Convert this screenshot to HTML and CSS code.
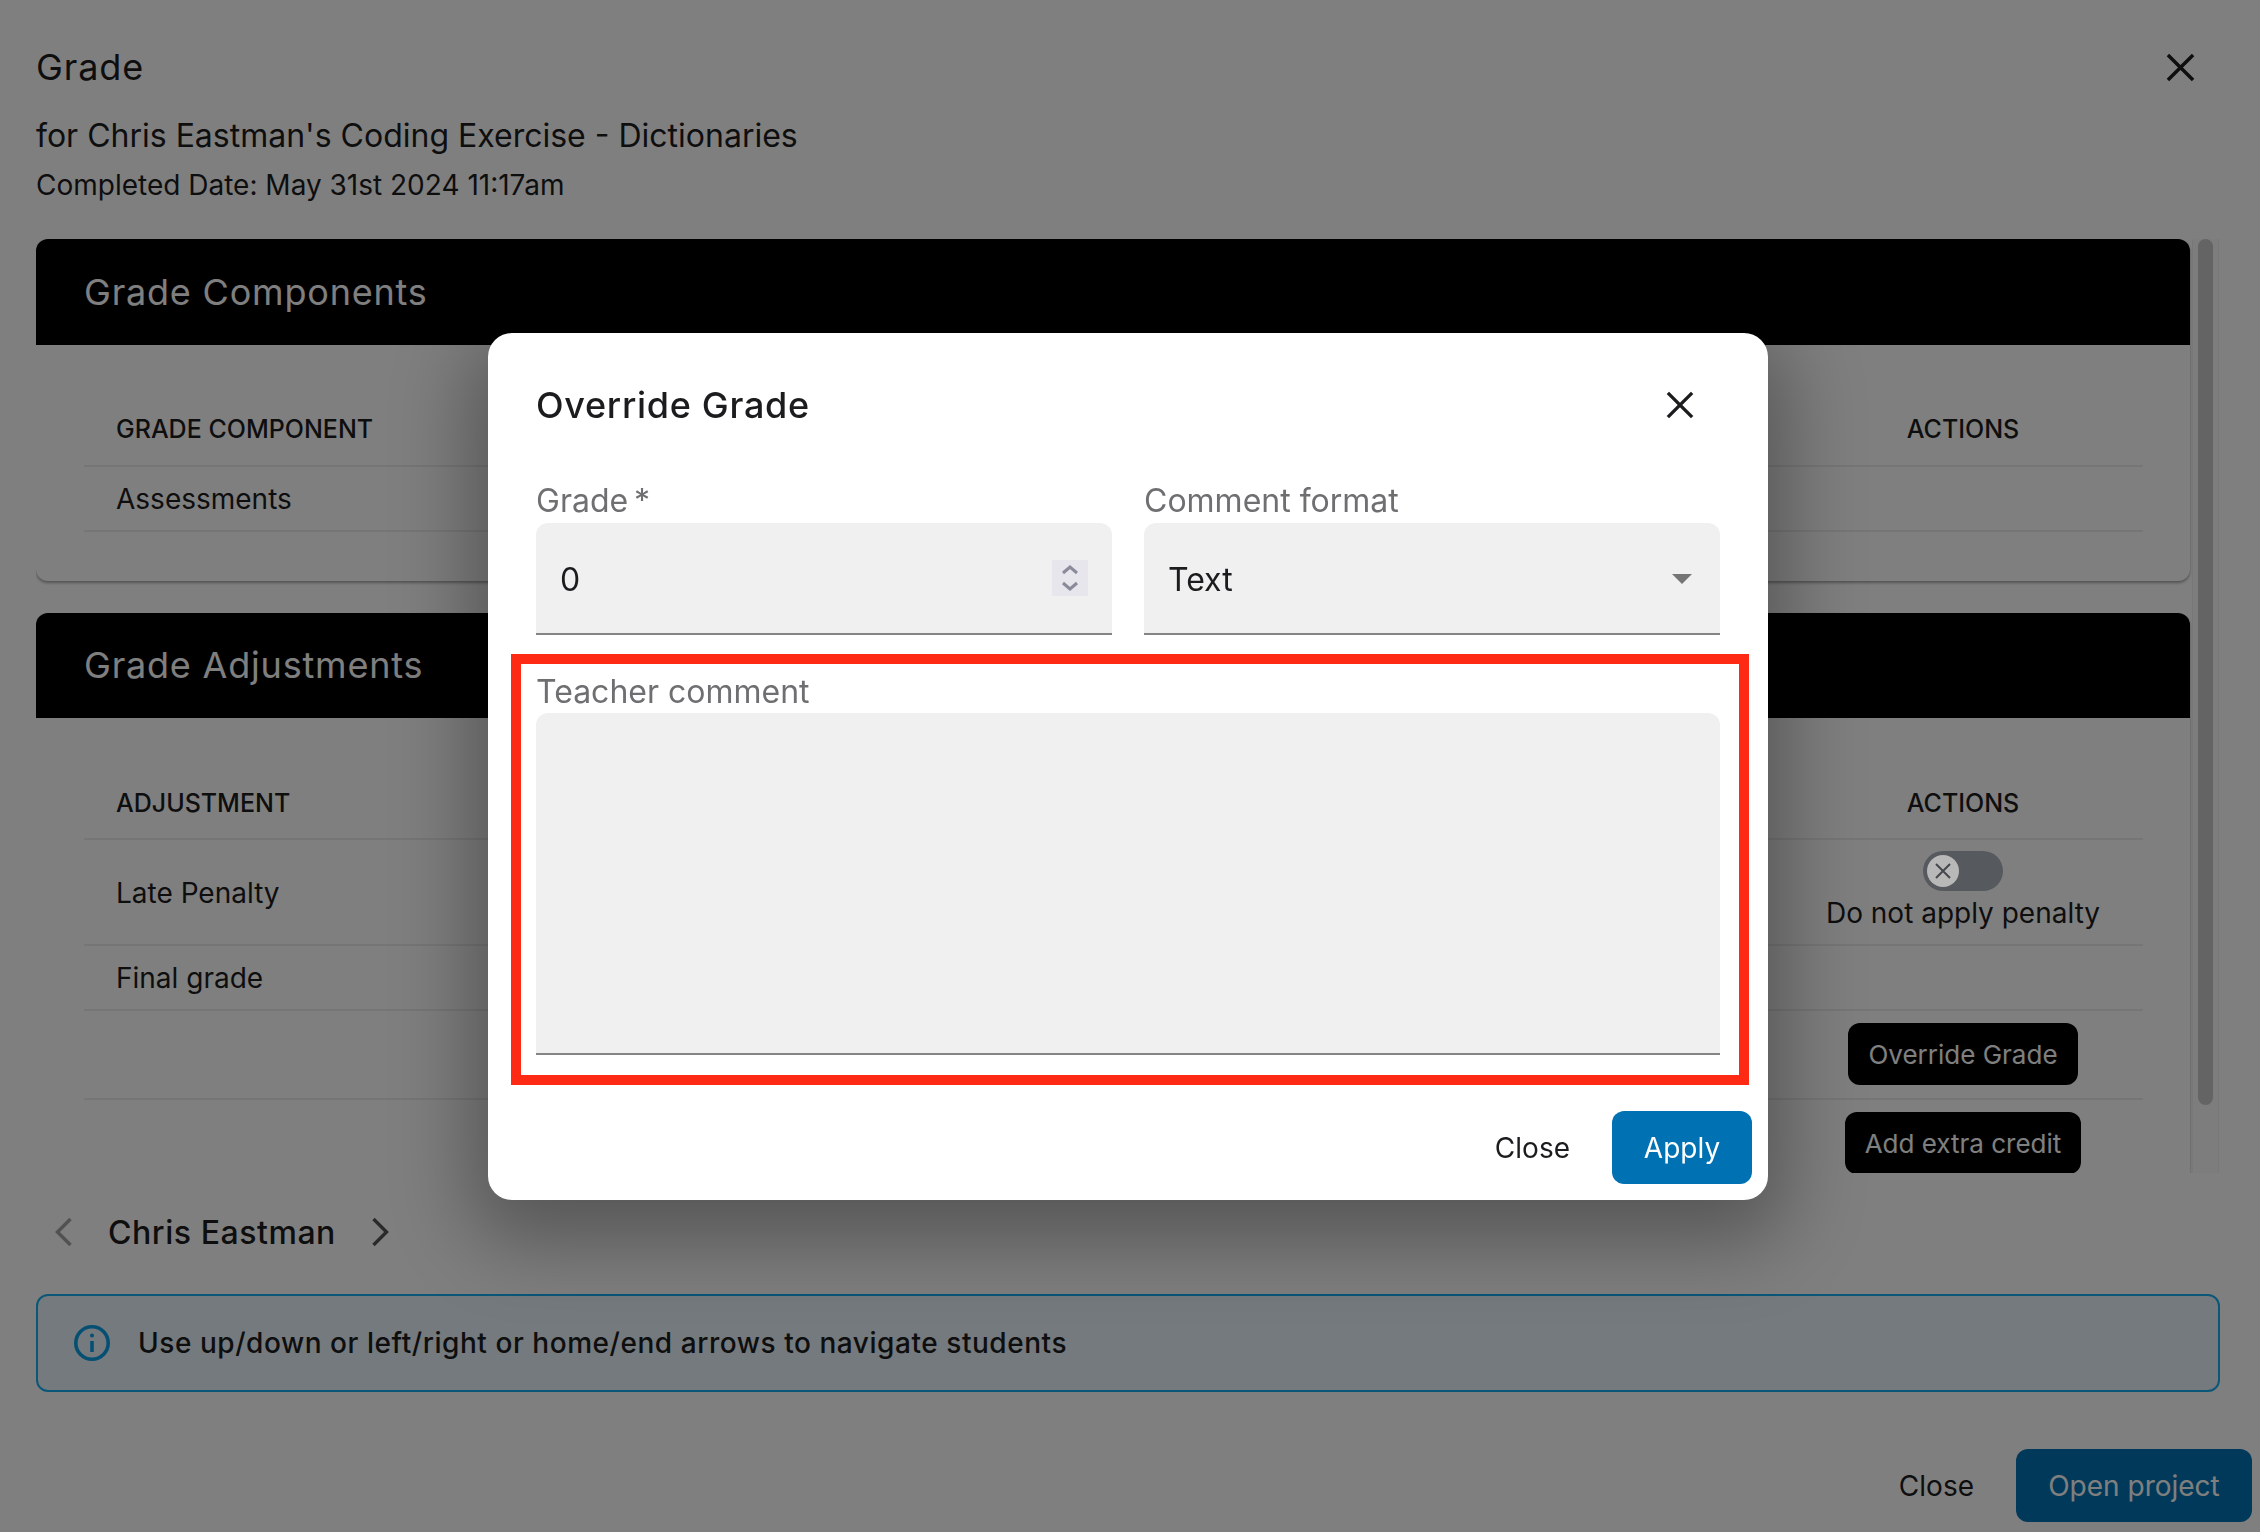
FILE: index.html
```html
<!DOCTYPE html>
<html lang="en">
<head>
  <meta charset="UTF-8">
  <title>Grade</title>
  <link rel="stylesheet" href="styles.css">
</head>
<body>
  <div class="page">
    <div class="title-row">
      <h2 class="page-title">Grade</h2>
      <svg class="close-icon page-close" viewBox="0 0 30 30"><path d="M2 2 L28 28 M28 2 L2 28"/></svg>
    </div>
    <div class="subtitle">for Chris Eastman's Coding Exercise - Dictionaries</div>
    <div class="completed">Completed Date: May 31st 2024 11:17am</div>

    <div class="scroll-area">
      <div class="scroll-content">
        <section class="card">
          <h3 class="card-header">Grade Components</h3>
          <div class="card-body">
            <div class="row head-row"><div>GRADE COMPONENT</div><div class="actions">ACTIONS</div></div>
            <div class="row"><div>Assessments</div><div class="actions"></div></div>
          </div>
        </section>

        <section class="card">
          <h3 class="card-header">Grade Adjustments</h3>
          <div class="card-body">
            <div class="row head-row"><div>ADJUSTMENT</div><div class="actions">ACTIONS</div></div>
            <div class="row toggle-row">
              <div>Late Penalty</div>
              <div class="actions">
                <span class="toggle"><span class="thumb"><svg viewBox="0 0 16 16"><path d="M1 1 L15 15 M15 1 L1 15"/></svg></span></span>
                <span class="toggle-text">Do not apply penalty</span>
              </div>
            </div>
            <div class="row"><div>Final grade</div><div class="actions"></div></div>
            <div class="row button-row"><div></div><div class="actions"><button class="dark-btn">Override Grade</button></div></div>
            <div class="row button-row"><div></div><div class="actions"><button class="dark-btn">Add extra credit</button></div></div>
          </div>
        </section>
      </div>
      <div class="scrollbar"><div class="scroll-thumb"></div></div>
    </div>

    <div class="student-nav">
      <svg class="chevron faded" viewBox="0 0 18 30"><path d="M16 2 L3 15 L16 28"/></svg>
      <span class="student-name">Chris Eastman</span>
      <svg class="chevron" viewBox="0 0 18 30"><path d="M2 2 L15 15 L2 28"/></svg>
    </div>

    <div class="alert">
      <svg class="info-icon" viewBox="0 0 36 36">
        <circle cx="18" cy="18" r="16.2"/>
        <path d="M18 16 V27"/>
        <circle class="dot" cx="18" cy="10.5" r="2"/>
      </svg>
      <span>Use up/down or left/right or home/end arrows to navigate students</span>
    </div>

    <div class="footer">
      <button class="text-btn">Close</button>
      <button class="primary-btn">Open project</button>
    </div>
  </div>

  <div class="backdrop"></div>

  <div class="modal">
    <div class="modal-head">
      <h2 class="modal-title">Override Grade</h2>
      <svg class="close-icon modal-close" viewBox="0 0 30 30"><path d="M2 2 L28 28 M28 2 L2 28"/></svg>
    </div>

    <div class="field-row">
      <div class="field">
        <div class="label">Grade&thinsp;*</div>
        <div class="control">
          <span>0</span>
          <span class="spinner">
            <svg viewBox="0 0 36 36"><path d="M11 13 L18 7 L25 13 M11 23 L18 29 L25 23"/></svg>
          </span>
        </div>
      </div>
      <div class="field">
        <div class="label">Comment format</div>
        <div class="control">
          <span>Text</span>
          <span class="caret"></span>
        </div>
      </div>
    </div>

    <div class="label comment-label">Teacher comment</div>
    <div class="control comment-box"></div>

    <div class="modal-footer">
      <button class="text-btn">Close</button>
      <button class="primary-btn apply-btn">Apply</button>
    </div>

    <div class="highlight"></div>
  </div>
</body>
</html>
```

FILE: styles.css
```css
* {
  box-sizing: border-box;
}

html, body {
  margin: 0;
  height: 1532px;
  overflow: hidden;
}

body {
  font-family: Inter, "Liberation Sans", sans-serif;
  background: #fff;
  color: #1c1c1e;
  font-size: 28px;
}

h2, h3 {
  margin: 0;
  font-weight: 400;
}

button {
  font-family: inherit;
  border: none;
  cursor: pointer;
}

.page {
  padding: 45px 40px 0 36px;
}

.title-row {
  display: flex;
  justify-content: space-between;
  align-items: center;
  height: 44px;
  padding-right: 25px;
}

.page-title {
  font-size: 36px;
  letter-spacing: 0.9px;
}

.close-icon {
  fill: none;
  stroke: #1c1c1e;
  stroke-width: 3.6;
}

.page-close {
  width: 29px;
  height: 29px;
}

.subtitle {
  margin-top: 25px;
  font-size: 32px;
  line-height: 44px;
}

.completed {
  margin-top: 9px;
  font-size: 28px;
  line-height: 36px;
}

.scroll-area {
  margin-top: 36px;
  height: 934px;
  display: flex;
  overflow: hidden;
}

.scroll-content {
  width: 2154px;
}

.scrollbar {
  width: 27px;
  margin-left: 2px;
  padding: 0 5px;
  background: #fafafa;
  border-left: 1px solid #f0f0f0;
  border-right: 1px solid #f0f0f0;
}

.scroll-thumb {
  height: 866px;
  border-radius: 8px;
  background: #c8c8c8;
}

.card {
  margin-bottom: 31.5px;
  border-radius: 12px;
  background: #fff;
  box-shadow: 0 2px 3px rgba(0, 0, 0, 0.35);
}

.card:last-child {
  margin-bottom: 0;
}

.card-header {
  height: 105.5px;
  padding: 0 48px;
  display: flex;
  align-items: center;
  font-size: 36px;
  letter-spacing: 0.8px;
  color: #fff;
  background: #000;
  border-radius: 12px 12px 0 0;
}

.card-body {
  padding: 49.5px 47px 49.5px 48px;
}

.row {
  display: grid;
  grid-template-columns: 1fr 360px;
  align-items: center;
  min-height: 65px;
  padding-left: 32px;
  border-bottom: 2px solid #ececec;
}

.row:not(.head-row) > div:first-child {
  padding-top: 2px;
}

.head-row {
  min-height: 72.5px;
  font-size: 25px;
  font-weight: 500;
}

.actions {
  display: flex;
  flex-direction: column;
  align-items: center;
  text-align: center;
}

.toggle-row {
  min-height: 105.5px;
}

.toggle-row .actions {
  align-self: start;
  padding-top: 11px;
}

.toggle-text {
  margin-top: 5px;
  line-height: 34px;
}

.toggle {
  position: relative;
  z-index: 2;
  width: 80px;
  height: 40px;
  padding: 4px;
  border-radius: 20px;
  background: #565a5e;
}

.thumb {
  width: 32px;
  height: 32px;
  border-radius: 50%;
  background: #b8b8b8;
  display: flex;
  align-items: center;
  justify-content: center;
}

.thumb svg {
  width: 16px;
  height: 16px;
  fill: none;
  stroke: #44484c;
  stroke-width: 2;
}

.button-row {
  min-height: 89px;
}

.dark-btn {
  height: 62px;
  padding: 0 20px;
  font-size: 26px;
  color: #fff;
  background: #000;
  border-radius: 12px;
}

.student-nav {
  margin-top: 35px;
  height: 48px;
  display: flex;
  align-items: center;
  padding-left: 18px;
}

.chevron {
  width: 19px;
  height: 30px;
  fill: none;
  stroke: #1c1c1e;
  stroke-width: 3.4;
  opacity: 0.75;
}

.chevron.faded {
  opacity: 0.4;
}

.student-name {
  margin: 0 35px;
  font-size: 32px;
  font-weight: 500;
  letter-spacing: 0.55px;
}

.alert {
  margin-top: 38px;
  height: 98px;
  display: flex;
  align-items: center;
  gap: 28px;
  padding-left: 36px;
  font-size: 28px;
  font-weight: 500;
  letter-spacing: 0.55px;
  background: #e8f4fb;
  border: 2px solid #14aef0;
  border-radius: 12px;
}

.info-icon {
  width: 36px;
  height: 36px;
  fill: none;
  stroke: #0a9fe6;
  stroke-width: 3.6;
}

.info-icon .dot {
  fill: #0a9fe6;
  stroke: none;
}

.footer {
  margin-top: 57px;
  margin-right: -32px;
  display: flex;
  justify-content: flex-end;
  align-items: center;
  gap: 42px;
}

.text-btn {
  padding: 0;
  font-size: 28px;
  color: #1c1c1e;
  background: none;
}

.primary-btn {
  width: 236px;
  height: 73px;
  font-size: 28px;
  color: #fff;
  background: #0072b4;
  border-radius: 12px;
}

.backdrop {
  position: fixed;
  inset: 0;
  background: rgba(0, 0, 0, 0.5);
}

.modal {
  position: absolute;
  left: 488px;
  top: 333px;
  width: 1280px;
  height: 867px;
  z-index: 3;
  padding: 48px 48px 16px;
  background: #fff;
  border-radius: 24px;
  box-shadow: 0 24px 80px 18px rgba(0, 0, 0, 0.32);
}

.modal-head {
  height: 48px;
  display: flex;
  justify-content: space-between;
  align-items: center;
  padding-right: 26px;
}

.modal-title {
  font-size: 36px;
  font-weight: 500;
  letter-spacing: 0.7px;
}

.modal-close {
  width: 28px;
  height: 28px;
}

.field-row {
  margin-top: 55px;
  display: grid;
  grid-template-columns: 576px 576px;
  gap: 32px;
}

.label {
  height: 32px;
  line-height: 34px;
  font-size: 32px;
  color: #6f6f72;
}

.control {
  margin-top: 7px;
  height: 112px;
  display: flex;
  justify-content: space-between;
  align-items: center;
  padding: 2px 24px 0;
  font-size: 32px;
  background: #f0f0f0;
  border-bottom: 2px solid #858585;
  border-radius: 12px 12px 0 0;
}

.spinner {
  width: 36px;
  height: 36px;
  margin-top: -2px;
  background: #e6e6ec;
}

.spinner svg {
  display: block;
  fill: none;
  stroke: #8a8a9a;
  stroke-width: 3;
}

.caret {
  margin-right: 4px;
  border-left: 10px solid transparent;
  border-right: 10px solid transparent;
  border-top: 10px solid #757575;
}

.comment-label {
  margin-top: 40px;
}

.comment-box {
  margin-top: 6px;
  height: 342px;
}

.modal-footer {
  margin: 56px -32px 0 0;
  display: flex;
  justify-content: flex-end;
  align-items: center;
  gap: 42px;
}

.apply-btn {
  width: 140px;
}

.highlight {
  position: absolute;
  left: 23px;
  top: 321px;
  width: 1238px;
  height: 431px;
  border: 10px solid #ff2a14;
}
```
